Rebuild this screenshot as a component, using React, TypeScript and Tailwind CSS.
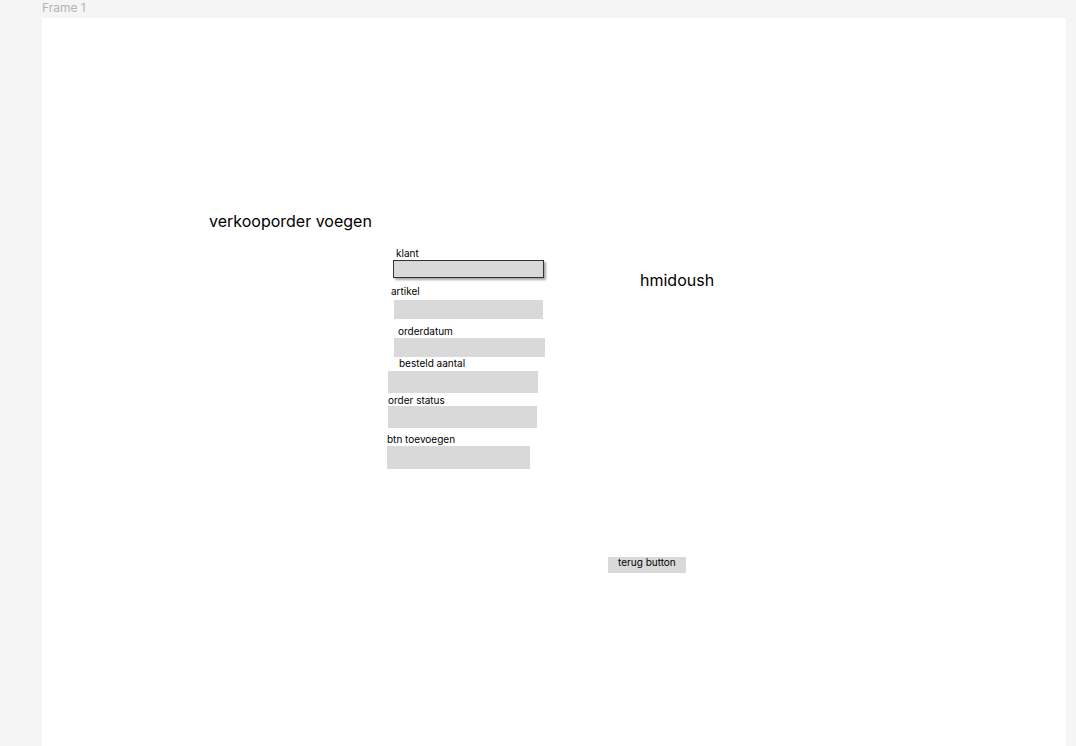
import React from 'react';

type Field = {
  label: string;
  lx: number;
  ly: number;
  bx: number;
  by: number;
  bw: number;
  bh: number;
  active?: boolean;
};

const fields: Field[] = [
  { label: 'klant', lx: 354, ly: 229, bx: 351, by: 242, bw: 151, bh: 18, active: true },
  { label: 'artikel', lx: 349, ly: 267, bx: 352, by: 282, bw: 149, bh: 19 },
  { label: 'orderdatum', lx: 356, ly: 307, bx: 352, by: 320, bw: 151, bh: 19 },
  { label: 'besteld aantal', lx: 357, ly: 339, bx: 346, by: 353, bw: 150, bh: 22 },
  { label: 'order status', lx: 346, ly: 376, bx: 346, by: 388, bw: 149, bh: 22 },
  { label: 'btn toevoegen', lx: 345, ly: 415, bx: 345, by: 428, bw: 143, bh: 23 },
];

const App: React.FC = () => {
  return (
    <div className="relative w-[1076px] h-[746px] overflow-hidden bg-[#f5f5f5] font-['Inter','Liberation_Sans',sans-serif]">
      <div className="absolute left-[42px] top-0 text-[12px] leading-[16px] text-[#b3b3b3]">Frame 1</div>

      {/* canvas frame */}
      <div className="absolute left-[42px] top-[18px] w-[1024px] h-[728px] bg-white">
        <h1 className="absolute left-[167px] top-[193px] text-[16px] leading-[20px] text-black font-normal">
          verkooporder voegen
        </h1>

        <div className="absolute left-[598px] top-[252px] text-[16px] leading-[20px] text-black">hmidoush</div>

        {fields.map((f) => (
          <React.Fragment key={f.label}>
            <span
              className="absolute text-[10px] leading-[12px] text-black whitespace-nowrap"
              style={{ left: f.lx, top: f.ly }}
            >
              {f.label}
            </span>
            <div
              className={
                f.active
                  ? 'absolute bg-[#d9d9d9] border border-[#333333] shadow-[2px_2px_2px_rgba(0,0,0,0.35)]'
                  : 'absolute bg-[#d9d9d9]'
              }
              style={{ left: f.bx, top: f.by, width: f.bw, height: f.bh }}
            />
          </React.Fragment>
        ))}

        <div className="absolute left-[566px] top-[539px] w-[78px] h-[16px] bg-[#d9d9d9] pl-[10px] text-[10px] leading-[10px] text-black whitespace-nowrap">
          terug button
        </div>
      </div>
    </div>
  );
};

export default App;
